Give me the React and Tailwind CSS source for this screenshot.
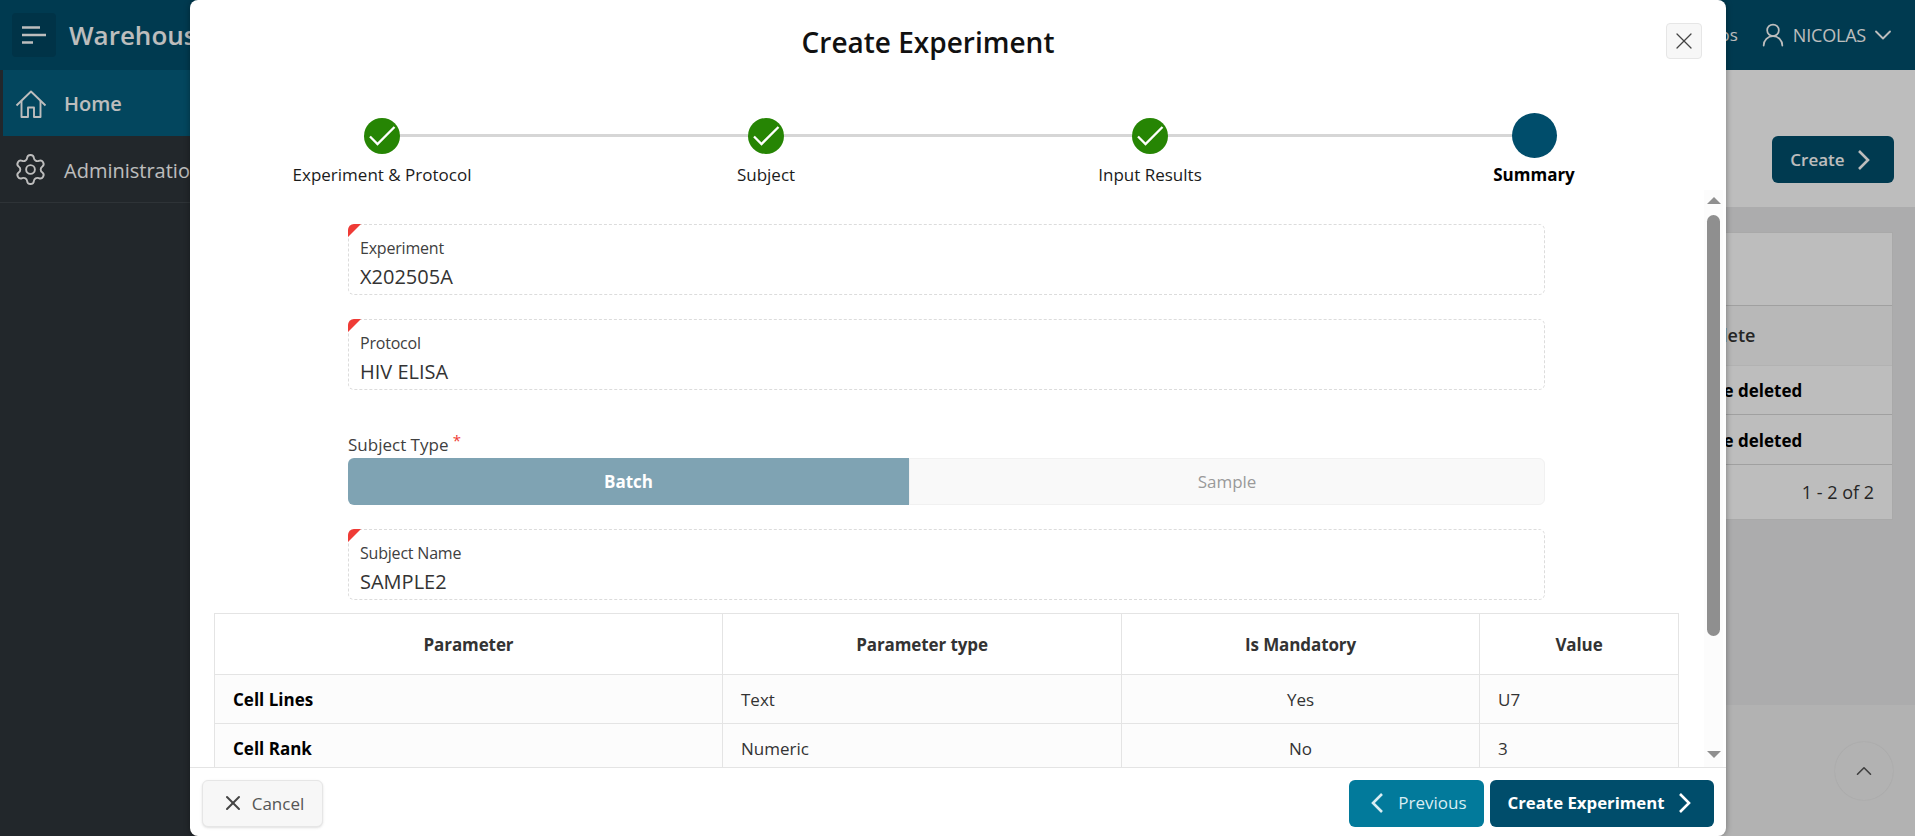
import { ChevronDown, ChevronUp, Settings, UserRound, X } from "lucide-react";

const steps = ["Experiment & Protocol", "Subject", "Input Results", "Summary"];

const rows = [
  ["Cell Lines", "Text", "Yes", "U7"],
  ["Cell Rank", "Numeric", "No", "3"],
];

const MenuIcon = () => (
  <svg width="24" height="18" viewBox="0 0 24 18" fill="none" stroke="currentColor" strokeWidth="2.4">
    <path d="M0 1.5h18M0 9h24M0 16.5h11" />
  </svg>
);

const HomeIcon = () => (
  <svg width="32" height="28" viewBox="0 0 32 28" fill="none" stroke="currentColor" strokeWidth="1.9" strokeLinejoin="round">
    <path d="M1.5 15.5 16 1.5l14.5 14" />
    <path d="M6.5 11v16h6.5v-9.5h6V27h6.5V11" />
  </svg>
);

const Chevron = ({ left }) => (
  <svg width="14" height="22" viewBox="0 0 14 22" fill="none" stroke="currentColor" strokeWidth="2.6">
    <path d={left ? "M12 2 3 11l9 9" : "M2 2l9 9-9 9"} />
  </svg>
);

const Header = () => (
  <header className="h-[70px] shrink-0 flex items-center bg-[#004f6c] text-white">
    <div className="ml-3 w-11 h-11 rounded flex items-center justify-center bg-[#004560]">
      <MenuIcon />
    </div>
    <span className="ml-[13px] text-[26px] font-semibold whitespace-nowrap">Warehouse Experiments</span>
    <div className="ml-auto flex items-center">
      <span className="text-[17px] mr-[21px]">Apps</span>
      <UserRound className="w-[28px] h-[28px] mr-[6px]" strokeWidth={1.5} />
      <span className="text-[18px] tracking-[-0.2px]">NICOLAS</span>
      <ChevronDown className="w-[28px] h-[28px] ml-[3px] mr-[18px]" strokeWidth={1.6} />
    </div>
  </header>
);

const Sidebar = () => (
  <aside className="w-[270px] shrink-0 bg-[#2e353a] text-white text-[20px]">
    <div className="h-[66px] ml-[3px] pl-[12px] pt-[2px] flex items-center gap-[17px] bg-[#055f7f] font-semibold">
      <HomeIcon />
      <span>Home</span>
    </div>
    <div className="h-[67px] pl-[13px] flex items-center gap-[16px] border-b border-[#3f464b]">
      <Settings className="w-[35px] h-[35px]" strokeWidth={1.3} />
      <span className="pt-[3px]">Administration</span>
    </div>
  </aside>
);

const BackPage = () => (
  <main className="flex-1 flex flex-col min-w-0">
    <div className="h-[137px] bg-white flex justify-end pt-[66px] pr-[21px]">
      <button className="w-[122px] h-[47px] pr-[5px] rounded-md bg-[#004f6c] text-white font-semibold text-[17px] flex items-center justify-center gap-[12px]">
        Create
        <Chevron />
      </button>
    </div>
    <div className="flex-1 bg-[#e9e9ea] pt-[25px] pr-[22px] pl-6">
      <div className="bg-[#ffffff] border border-[#e4e4e4] text-[18px]">
        <div className="h-[73px] border-b border-[#d8d8d8]" />
        <div className="h-[60px] flex justify-end border-b border-[#f0f0f0] bg-[#f8f8f8]">
          <div className="w-[193px] flex items-center font-semibold text-[#333]">Delete</div>
        </div>
        <div className="h-[49px] flex justify-end border-b border-[#d8d8d8]">
          <div className="w-[204px] pt-[2px] flex items-center text-[17px] font-bold text-black whitespace-nowrap">To be deleted</div>
        </div>
        <div className="h-[50px] flex justify-end border-b border-[#d8d8d8]">
          <div className="w-[204px] pt-[2px] flex items-center text-[17px] font-bold text-black whitespace-nowrap">To be deleted</div>
        </div>
        <div className="h-[54px] flex items-center justify-end pr-[18px] text-[#333]">1 - 2 of 2</div>
      </div>
    </div>
    <div className="h-[131px] bg-[#f1f1f1]" />
  </main>
);

const Step = ({ label, index }) => {
  const current = index === steps.length - 1;
  return (
    <div className="relative flex flex-col items-center">
      <div className="h-[45px] flex items-center justify-center">
        {current ? (
          <div className="w-[45px] h-[45px] rounded-full bg-[#004d6b]" />
        ) : (
          <div className="w-[36px] h-[36px] rounded-full bg-[#268504] flex items-center justify-center">
            <svg width="28" height="21" viewBox="0 0 28 21" fill="none" stroke="white" strokeWidth="2.3">
              <path d="M2 11.5l7.5 7.5L26.5 2" />
            </svg>
          </div>
        )}
      </div>
      <span className={`mt-[5px] text-[17px] leading-[24px] ${current ? "font-bold text-black" : "text-[#1b1b1b]"}`}>
        {label}
      </span>
    </div>
  );
};

const DisplayField = ({ label, value }) => (
  <div className="relative h-[71px] rounded-md border border-dashed border-[#dcdcdc] pl-[11px] pt-[12px]">
    <div className="absolute -left-px -top-px w-[13px] h-[13px] rounded-tl-md bg-[#ef3b36] [clip-path:polygon(0_0,100%_0,0_100%)]" />
    <div className="text-[16px] leading-[22px] tracking-[-0.2px] text-[#404040]">{label}</div>
    <div className="mt-[3px] text-[20px] leading-[30px] text-[#333]">{value}</div>
  </div>
);

const SummaryTable = () => (
  <table className="w-[1464px] table-fixed border-collapse mt-[13px] text-[17px] text-[#333]">
    <colgroup>
      <col className="w-[508px]" />
      <col className="w-[399px]" />
      <col className="w-[358px]" />
      <col className="w-[199px]" />
    </colgroup>
    <thead>
      <tr className="h-[61px]">
        {["Parameter", "Parameter type", "Is Mandatory", "Value"].map((h) => (
          <th key={h} className="border border-[#e4e4e4] pt-[2px] font-bold text-center tracking-[-0.1px]">
            {h}
          </th>
        ))}
      </tr>
    </thead>
    <tbody>
      {rows.map((r) => (
        <tr key={r[0]} className="h-[49px] bg-[#fcfcfc]">
          <td className="border border-[#e4e4e4] pt-[2px] pl-[18px] font-bold text-black">{r[0]}</td>
          <td className="border border-[#e4e4e4] pt-[2px] pl-[18px]">{r[1]}</td>
          <td className="border border-[#e4e4e4] pt-[2px] text-center">{r[2]}</td>
          <td className="border border-[#e4e4e4] pt-[2px] pl-[18px]">{r[3]}</td>
        </tr>
      ))}
    </tbody>
  </table>
);

const ScrollBar = () => (
  <div className="w-[19px] shrink-0 bg-[#fcfcfc] flex flex-col items-center pt-[7px] pb-[9px]">
    <div className="w-0 h-0 border-x-[7px] border-x-transparent border-b-[7px] border-b-[#8f8f8f]" />
    <div className="mt-[11px] h-[421px] w-[13px] rounded-full bg-[#8f8f8f]" />
    <div className="mt-auto w-0 h-0 border-x-[7px] border-x-transparent border-t-[7px] border-t-[#8f8f8f]" />
  </div>
);

const Modal = () => (
  <div className="absolute left-[190px] top-0 w-[1536px] h-[836px] bg-white rounded-lg shadow-[0_0_6px_rgba(0,0,0,0.35)] flex flex-col overflow-hidden">
    <div className="relative h-[84px] shrink-0 flex items-center justify-center pr-[60px]">
      <h1 className="text-[28px] font-semibold text-[#111]">Create Experiment</h1>
      <button className="absolute right-[24px] top-[23px] w-[36px] h-[36px] rounded bg-[#f7f7f7] border border-[#e6e6e6] flex items-center justify-center text-[#444]">
        <X className="w-[28px] h-[28px]" strokeWidth={1.1} />
      </button>
    </div>

    <div className="relative shrink-0 h-[106px] pt-[29px]">
      <div className="absolute left-[192px] right-[192px] top-[50px] h-[3px] bg-[#d6d6d6]" />
      <div className="grid grid-cols-4">
        {steps.map((s, i) => (
          <Step key={s} label={s} index={i} />
        ))}
      </div>
    </div>

    <div className="flex-1 flex min-h-0 pr-[3px]">
      <div className="flex-1 min-w-0 overflow-hidden pl-[24px] pt-[34px]">
        <div className="w-[1197px] ml-[134px] flex flex-col gap-[24px]">
          <DisplayField label="Experiment" value="X202505A" />
          <DisplayField label="Protocol" value="HIV ELISA" />
          <div className="mt-[18px]">
            <div className="h-[26px] text-[17px] leading-[26px] text-[#404040]">
              Subject Type <span className="relative -top-[5px] text-[#ef3b36] text-[15px]">*</span>
            </div>
            <div className="flex h-[47px]">
              <div className="w-[561px] rounded-l-md bg-[#7fa3b3] text-white font-bold text-[17px] flex items-center justify-center">
                Batch
              </div>
              <div className="flex-1 rounded-r-md bg-[#f9f9f9] border border-[#f1f1f1] text-[#9a9a9a] text-[17px] flex items-center justify-center">
                Sample
              </div>
            </div>
          </div>
          <DisplayField label="Subject Name" value="SAMPLE2" />
        </div>
        <SummaryTable />
      </div>
      <ScrollBar />
    </div>

    <div className="h-[69px] shrink-0 border-t border-[#e4e4e4] flex items-center pt-[2px] pl-[12px] pr-[12px] text-[17px]">
      <button className="w-[121px] h-[47px] rounded-md bg-[#f7f7f7] border border-[#e6e6e6] shadow-sm text-[#555] flex items-center justify-center gap-[7px]">
        <X className="w-[24px] h-[24px] text-[#444]" strokeWidth={2} />
        <span className="pt-[2px]">Cancel</span>
      </button>
      <button className="ml-auto w-[135px] h-[47px] pl-[4px] rounded-md bg-[#027a9b] text-[#d9edf3] flex items-center justify-center gap-[14px]">
        <Chevron left />
        Previous
      </button>
      <button className="ml-[6px] w-[224px] h-[47px] pr-[5px] rounded-md bg-[#004d6b] text-white font-bold text-[16.8px] flex items-center justify-center gap-[13px]">
        Create Experiment
        <Chevron />
      </button>
    </div>
  </div>
);

export default function App() {
  return (
    <div className="relative w-[1915px] h-[836px] overflow-hidden font-['Open_Sans',sans-serif]">
      <div className="h-full flex flex-col">
        <Header />
        <div className="flex-1 flex min-h-0">
          <Sidebar />
          <BackPage />
        </div>
      </div>

      <button className="absolute left-[1835px] top-[742px] w-[58px] h-[58px] rounded-full bg-[#f1f1f1] shadow-[0_0_2px_rgba(0,0,0,0.1)] flex items-center justify-center text-[#555]">
        <ChevronUp className="w-[26px] h-[26px]" strokeWidth={1.5} />
      </button>

      {/* dimmed backdrop under the dialog */}
      <div className="absolute inset-0 bg-black/26" />
      <Modal />
    </div>
  );
}
